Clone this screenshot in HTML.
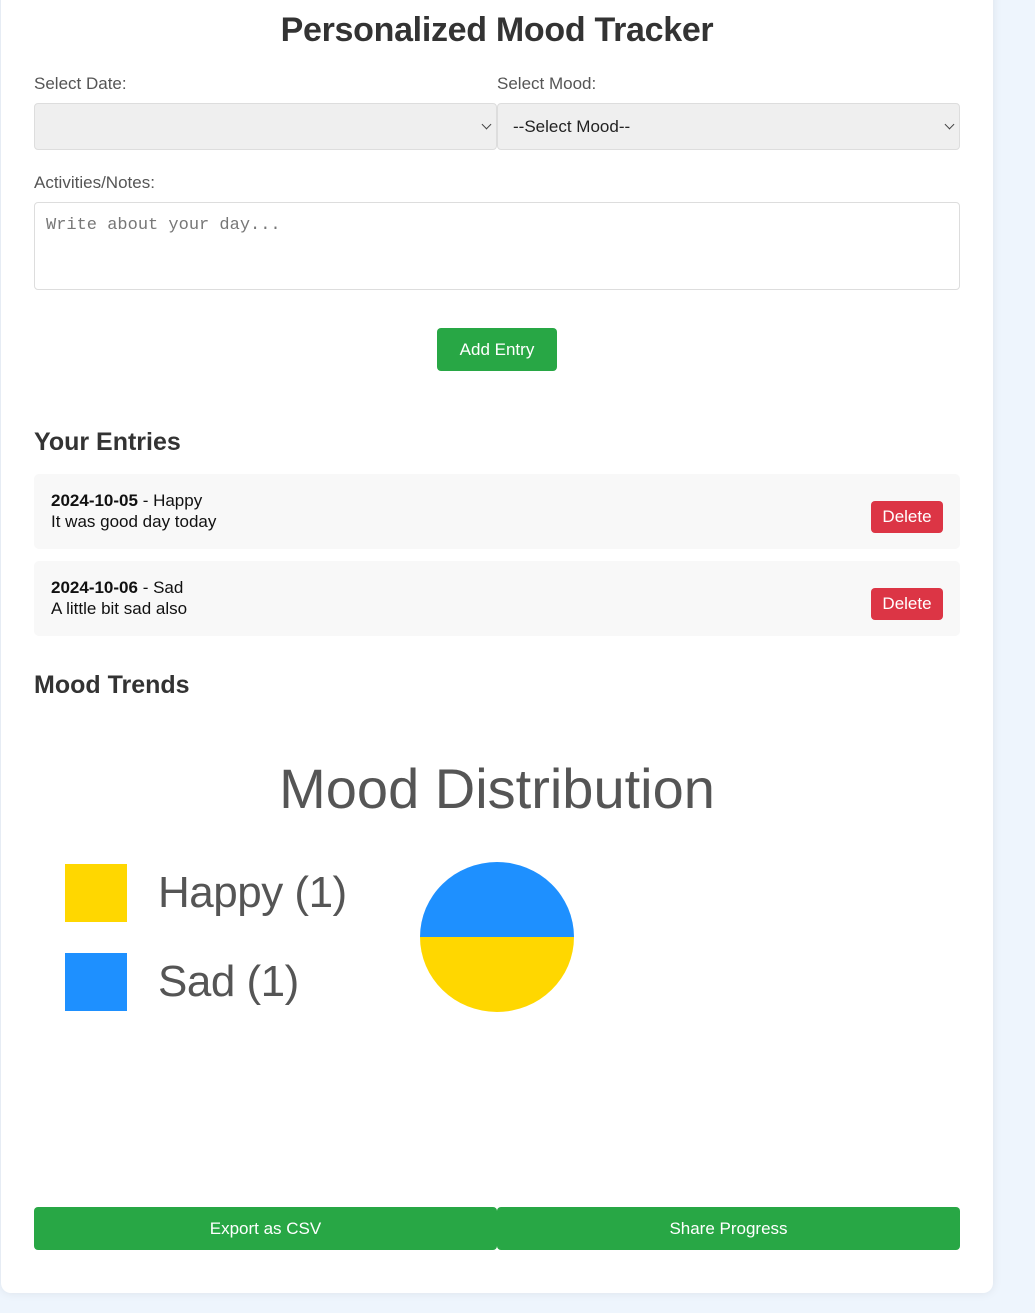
<!DOCTYPE html>
<html><head><style>
*{box-sizing:border-box;margin:0;padding:0}
body{width:1035px;height:1313px;background:#eef5fd;font-family:"Liberation Sans",sans-serif;color:#333;position:relative;overflow:hidden}
.card{position:absolute;left:1px;top:-20px;width:992px;height:1313px;background:#fff;border-radius:10px;box-shadow:0 0 10px rgba(0,0,0,0.08)}
.a{position:absolute}
h1{position:absolute;left:0;width:994px;text-align:center;top:11px;font-size:34px;font-weight:bold;color:#333;letter-spacing:-0.3px}
.lbl{font-size:17px;color:#555}
.sel{background:#efefef;border:1px solid #ddd;border-radius:4px;height:47px;font-size:17px;color:#222;padding:13px 0 0 15px}
.chev{position:absolute;right:6px;top:17px;width:7px;height:7px;border-right:1px solid #444;border-bottom:1px solid #444;transform:rotate(45deg)}
.btn{background:#28a745;color:#fff;border-radius:4px;text-align:center;font-size:17px}
.entry{background:#f8f8f8;border-radius:5px;left:34px;width:926px;height:75px;font-size:17px;color:#111;padding:16px 0 0 17px;line-height:21px}
.del{position:absolute;right:17px;top:27px;background:#dc3545;color:#fff;border-radius:4px;width:72px;height:32px;text-align:center;line-height:32px;font-size:17px}
h2{position:absolute;left:34px;font-size:25px;font-weight:bold;color:#333}
</style></head><body>
<div class="card"></div>
<h1>Personalized Mood Tracker</h1>
<div class="a lbl" style="left:34px;top:74px">Select Date:</div>
<div class="a lbl" style="left:497px;top:74px">Select Mood:</div>
<div class="a sel" style="left:34px;top:103px;width:463px"><span class="chev"></span></div>
<div class="a sel" style="left:497px;top:103px;width:463px">--Select Mood--<span class="chev"></span></div>
<div class="a lbl" style="left:34px;top:173px">Activities/Notes:</div>
<div class="a" style="left:34px;top:202px;width:926px;height:88px;border:1px solid #ddd;border-radius:4px;font-family:'Liberation Mono',monospace;font-size:17px;color:#777;padding:13px 11px">Write about your day...</div>
<div class="a btn" style="left:437px;top:328px;width:120px;height:43px;line-height:43px">Add Entry</div>
<h2 style="top:428px">Your Entries</h2>
<div class="a entry" style="top:474px"><b>2024-10-05</b> - Happy<br>It was good day today<div class="del">Delete</div></div>
<div class="a entry" style="top:561px"><b>2024-10-06</b> - Sad<br>A little bit sad also<div class="del">Delete</div></div>
<h2 style="top:671px">Mood Trends</h2>
<div class="a" style="left:0;width:994px;text-align:center;top:756px;font-size:56px;color:#555">Mood Distribution</div>
<div class="a" style="left:65px;top:864px;width:62px;height:58px;background:#FFD700"></div>
<div class="a" style="left:65px;top:953px;width:62px;height:58px;background:#1E90FF"></div>
<div class="a" style="left:158px;top:868px;font-size:44px;color:#555;letter-spacing:-0.5px">Happy (1)</div>
<div class="a" style="left:158px;top:957px;font-size:44px;color:#555;letter-spacing:-0.5px">Sad (1)</div>
<div class="a" style="left:420px;top:862px;width:154px;height:150px;border-radius:50%;background:linear-gradient(#1E90FF 50%,#FFD700 50%)"></div>
<div class="a btn" style="left:34px;top:1207px;width:463px;height:43px;line-height:43px">Export as CSV</div>
<div class="a btn" style="left:497px;top:1207px;width:463px;height:43px;line-height:43px">Share Progress</div>
</body></html>
